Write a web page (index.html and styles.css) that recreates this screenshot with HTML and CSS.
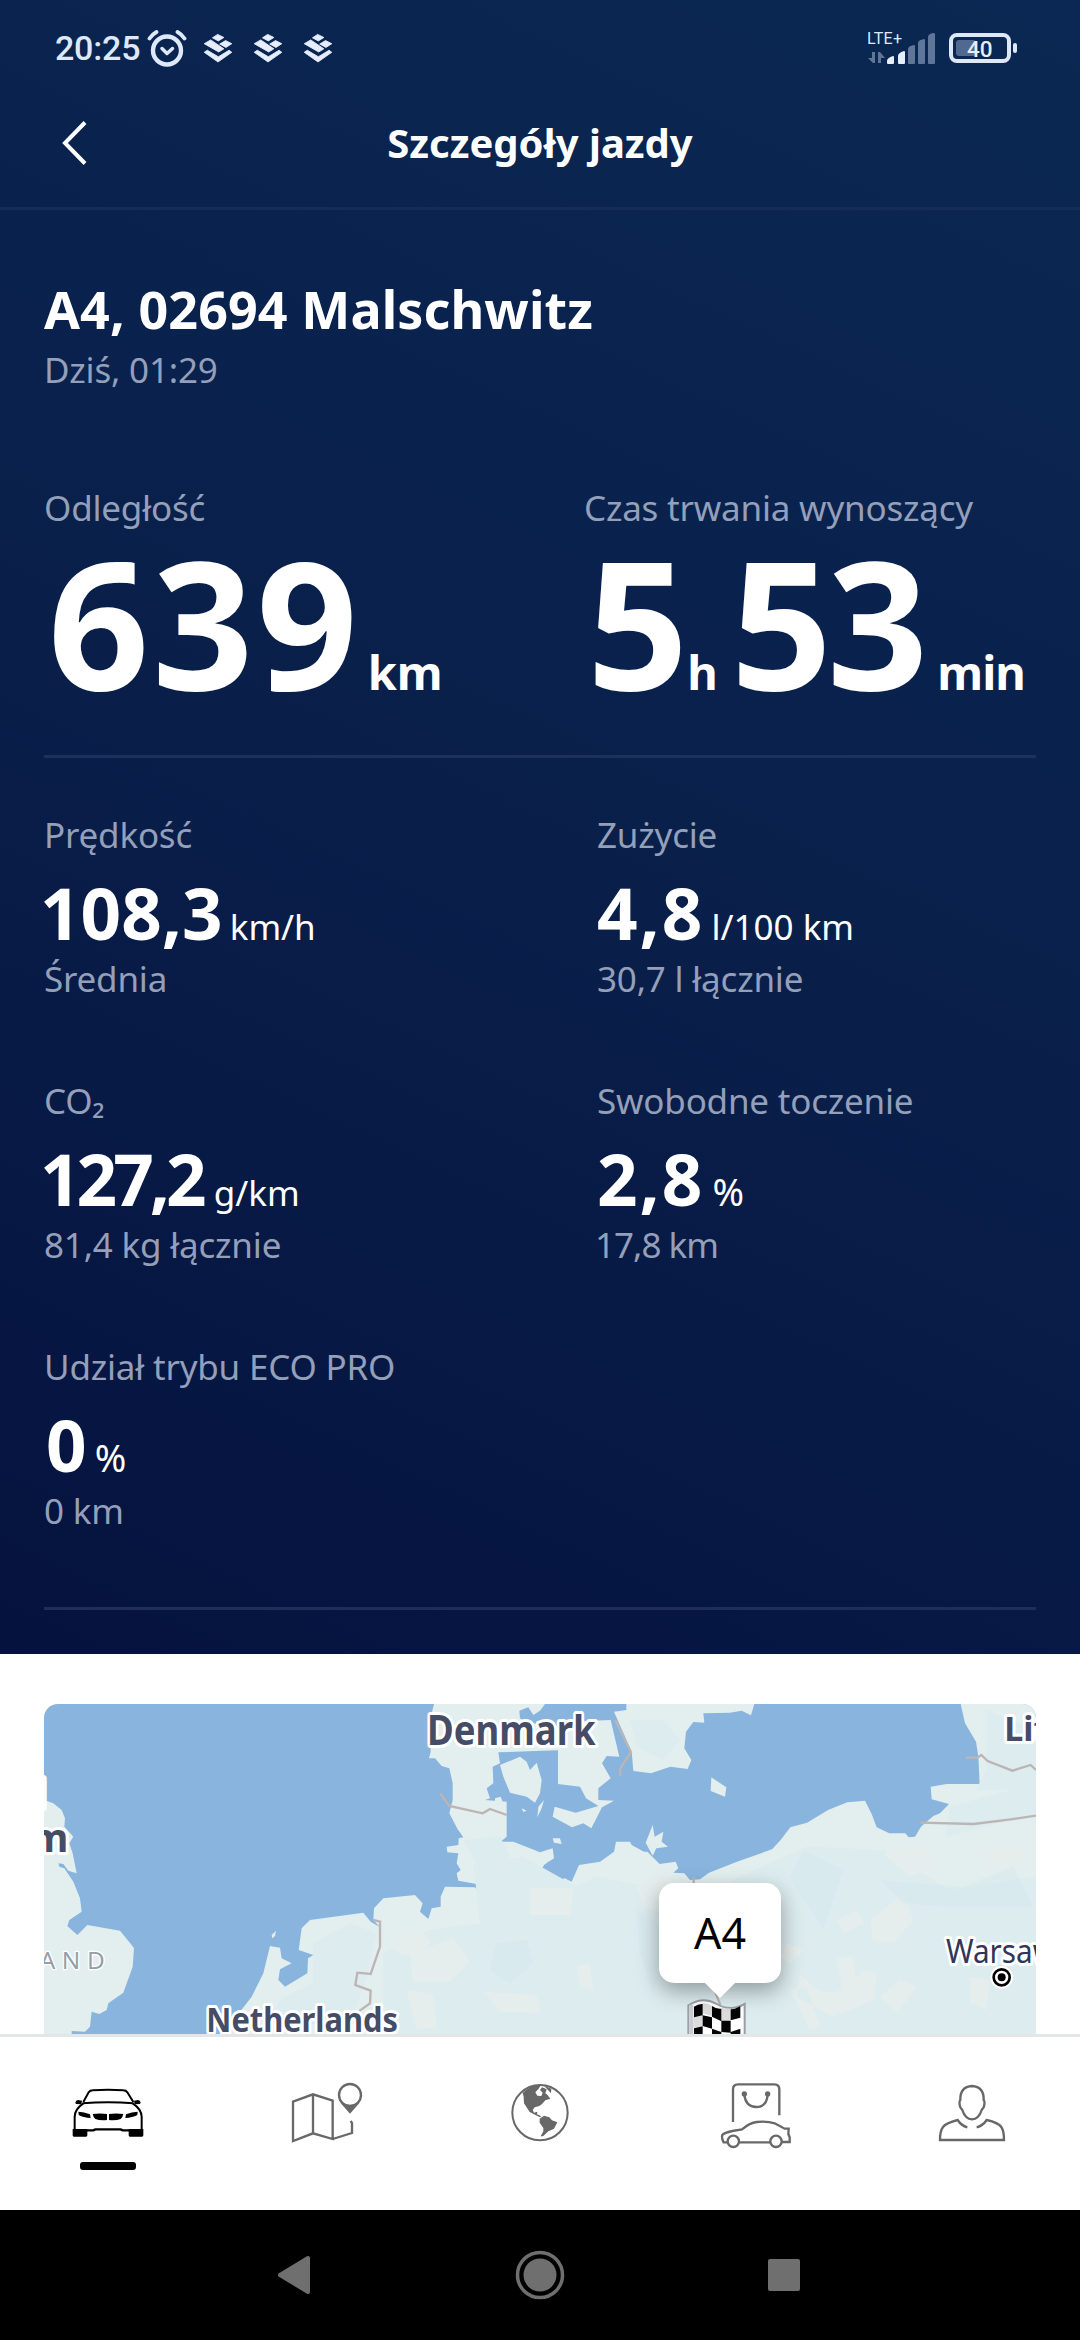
FILE: index.html
```html
<!DOCTYPE html>
<html lang="pl">
<head>
  <meta charset="UTF-8">
  <title>Szczegóły jazdy</title>
  <meta name="theme-color" content="#0a2650">
  <link rel="stylesheet" href="styles.css">
</head>
<body>
  <svg class="defs" width="0" height="0">
    <symbol id="layers" viewBox="590 99 86 87">
      <path stroke-width="2.500" stroke-linejoin="round" d="M632 103l18 9-16 10-17-9zM655 121l18 9-17 11-18-10zM612 119l38 26-15 9-42-24zM593 155l9-6 32 19 31-19 8 6-40 28z"/>
    </symbol>
  </svg>

  <div class="top">
    <div class="statusbar">
      <span class="time">20:25</span>
      <svg class="alarm" viewBox="0 0 40 38" fill="none">
        <circle cx="20" cy="21.5" r="14" stroke="#dfe8f9" stroke-width="4.4"/>
        <path d="M15 19.5l5 5 5.500-5" stroke="#dfe8f9" stroke-width="3.500" stroke-linecap="round" stroke-linejoin="round"/>
        <path d="M2.500 9.500Q5 5.500 9.500 3M30.500 3Q35 5.500 37.500 9.500" stroke="#dfe8f9" stroke-width="3.800" stroke-linecap="round"/>
      </svg>
      <svg class="layers"><use href="#layers"/></svg>
      <svg class="layers"><use href="#layers"/></svg>
      <svg class="layers"><use href="#layers"/></svg>
      <svg class="signal" viewBox="868 28 68 38">
        <text x="867" y="42.500" font-size="16" fill="#dfe8f9" textLength="35">LTE+</text>
        <path fill="#5f7699" d="M872 51h3v11h-2l-5-5h4zM878 62V51h2l5 6h-4v5z"/>
        <path fill="#e6edfb" d="M888 63q-1 0-1-1v-2q0-3 6-5 1 0 1 1v6q0 1-1 1zM899 63q-1 0-1-1v-7q0-3 6-5 1 0 1 1v11q0 1-1 1z"/>
        <path fill="#5f7699" d="M909 63q-1 0-1-1V48q0-3 6-4 1 0 1 1v17q0 1-1 1zM919 63q-1 0-1-1V42q0-3 6-4 1 0 1 1v23q0 1-1 1zM929 63q-1 0-1-1V36q0-3 5-4 2 0 2 1v29q0 1-1 1z"/>
      </svg>
      <svg class="battery" viewBox="949 31 69 32">
        <rect x="951" y="34" width="58" height="26" rx="6" fill="none" stroke="#dfe8f9" stroke-width="4"/>
        <rect x="956" y="39" width="20" height="16" rx="3" fill="#52698f"/>
        <rect x="1013" y="42" width="4" height="10" rx="2" fill="#dfe8f9"/>
        <text x="967" y="56" font-size="22.500" font-weight="500" fill="#e6edfb">40</text>
      </svg>
    </div>

    <div class="header">
      <svg class="back" viewBox="0 0 26 44" fill="none"><path d="M23 1.500L3 22l20 20.500" stroke="#fff" stroke-width="4"/></svg>
      <h1>Szczegóły jazdy</h1>
    </div>

    <div class="content">
      <h2>A4, 02694 Malschwitz</h2>
      <p class="muted date">Dziś, 01:29</p>

      <div class="main-stats">
        <div>
          <p class="muted">Odległość</p>
          <div class="big"><b class="km-value">639</b><span>km</span></div>
        </div>
        <div>
          <p class="muted">Czas trwania wynoszący</p>
          <div class="big"><b class="hours">5</b><span>h</span><b class="minutes">53</b><span class="min">min</span></div>
        </div>
      </div>

      <div class="stats">
        <div class="stat">
          <p class="muted">Prędkość</p>
          <div class="value one"><b>108,3</b><span>km/h</span></div>
          <p class="muted">Średnia</p>
        </div>
        <div class="stat">
          <p class="muted">Zużycie</p>
          <div class="value wide"><b>4,8</b><span>l/100 km</span></div>
          <p class="muted">30,7 l łącznie</p>
        </div>
        <div class="stat">
          <p class="muted">CO₂</p>
          <div class="value one tight"><b>127,2</b><span>g/km</span></div>
          <p class="muted">81,4 kg łącznie</p>
        </div>
        <div class="stat">
          <p class="muted">Swobodne toczenie</p>
          <div class="value wide"><b>2,8</b><span class="percent">%</span></div>
          <p class="muted seventeen">17,8 km</p>
        </div>
        <div class="stat">
          <p class="muted">Udział trybu ECO PRO</p>
          <div class="value zero"><b>0</b><span class="percent">%</span></div>
          <p class="muted">0 km</p>
        </div>
      </div>
    </div>
  </div>

  <div class="map-section">
    <div class="map">
      <svg viewBox="42 42 2976 990" width="992" height="330">
        <rect x="42" y="42" width="2976" height="990" fill="#88b4de"/>
        <!-- land -->
        <g fill="#e3eeee">
          <path d="M42 330L70 340 95 360 105 385 103 410 130 440 118 460 128 490 140 550 115 542 100 522 85 520 88 530 103 535 130 575 150 625 155 665 118 690 112 708 142 735 172 705 270 722 305 765 312 775 308 830 280 908 235 940 230 960 208 972 185 965 180 1010 165 1025 125 1023 125 1032 42 1032z"/>
          <path d="M570 1032L615 985 665 920 700 850 720 768 750 773 755 805 785 820 750 838 745 870 765 890 832 850 834 805 850 795 806 780 815 715 840 690 1000 668 1022 695 1050 712 1030 690 1032 655 1060 625 1155 615 1178 640 1170 665 1195 687 1205 655 1232 650 1232 620 1245 590 1335 592 1365 627 1340 582 1285 572 1280 550 1292 540 1280 520 1285 490 1252 487 1250 470 1285 465 1286 445 1300 442 1283 418 1258 370 1268 330 1268 280 1258 235 1235 228 1215 205 1197 205 1202 185 1200 90 1212 42 1545 42 1530 62 1510 75 1495 52 1468 62 1470 85 1490 98 1600 110 1600 180 1405 187 1410 220 1388 230 1390 280 1370 295 1380 325 1365 330 1430 335 1430 440 1412 455 1450 455 1475 465 1530 487 1568 475 1572 505 1542 525 1532 550 1595 560 1625 575 1647 525 1710 515 1752 485 1758 455 1800 455 1805 465 1842 485 1852 485 1889 522 1937 515 1945 535 1930 548 1963 550 1980 570 2010 568 2037 548 2121 515 2226 478 2252 450 2281 412 2331 398 2394 360 2452 337 2505 332 2525 372 2540 412 2578 430 2626 430 2636 442 2655 440 2673 410 2710 378 2730 370 2757 342 2705 328 2702 290 2750 282 2849 282 2845 200 2838 155 2805 100 2792 42 3018 42 3018 1032z"/>
          <path d="M1410 225L1470 200 1490 215 1500 240 1520 218 1535 270 1530 310 1515 338 1490 320 1440 308 1420 260z"/>
          <path d="M1584 180L1605 95 1742 90 1768 200 1730 198 1716 220 1742 265 1705 295 1705 330 1752 332 1716 352 1684 415 1660 400 1626 412 1568 380 1574 350 1637 368 1705 348 1668 325 1650 290 1584 282z"/>
          <path d="M1789 42L1789 60 1752 65 1805 185 1810 243 1863 250 1921 230 1973 237 1984 210 1963 175 1968 125 1990 96 2023 98 2020 70 2100 68 2135 62 2163 76 2173 42z"/>
          <path d="M2044 262L2089 292 2085 320 2042 303z"/>
          <path d="M1868 405L1874 440 1900 425 1895 455 1914 470 1879 475 1868 497 1847 458z"/>
          <path d="M1568 445L1590 445 1595 462 1572 458z"/>
          <path d="M1525 350L1542 330 1535 355 1522 382zM725 735L738 722 735 738 727 745zM1395 325L1412 320 1420 340 1395 345zM1475 355L1490 362 1480 366zM1500 42L1535 42 1515 60z"/>
        </g>
        <path fill="#88b4de" d="M1530 540l25-25 45-12 20 30-20 35-50-8z"/>
        <!-- lowlands and forests -->
        <g fill="#dcecef">
          <path d="M1330 520L1480 500 1640 590 1700 560 1900 600 1990 640 2130 560 2330 470 2560 480 2760 600 3018 560 3018 1032 1110 1032 1060 940 1060 790 1200 720 1350 700z"/>
          <path d="M850 760L960 700 1040 730 1010 860 960 1000 700 1010 760 920 850 880z"/>
          <path d="M1800 90l100 0 50 60-50 60-80-40zM2870 60l148 60v180l-180 0 30-60zM2760 350l258-70v90l-270 70z"/>
          <path d="M1300 450l110-10 30 60-90 40z"/>
        </g>
        <g fill="#e5eeec">
          <path d="M1100 740q90-40 100 20-60 60-110 15zM1140 790l130-45 50 70-60 60-110 0zM1360 905l160 10 10 55-120-5zM1130 900l80 10 10 100-60 10zM1500 595l130 0-10 80-120 0zM1820 590l90-50 40 60-30 80-80-30z"/>
          <path d="M2310 850q90 120 190-10l40 10-10 80-120 50-110-60zM2520 690l100-80 30 80-60 70-60-10zM2420 690l60-30 20 40-60 30zM2420 800l50 0 10 90-40 30zM2550 920l60-50 50 20-60 80zM2820 860l60 10-10 90-50-20zM2560 490l110-30 60 60-90 40zM2850 480l120-20 20 60-120 10zM2270 760l50 20-40 40-30-20zM2280 900l60 120 30-10-40-120zM1640 830l40-10 10 80-40-10z"/>
        </g>
        <path fill="#d7eaee" opacity=".7" d="M2550 570l250 20 150-60 60 120-250 0-140-10zM1400 760l90-10 20 70-70 60-60-40zM1820 660l110 70-60 180-40-120zM2280 560l40-80 120 60-60 180z"/>
        <!-- borders -->
        <g fill="none" stroke="#bdb5b5" stroke-width="7">
          <path d="M1030 690L1050 695 1050 770 1022 852 982 848 976 885 1022 902 1020 940 985 965M1230 310L1258 348 1358 370 1380 357 1430 375"/>
          <path d="M1756 90L1803 187 1771 235 1771 258M2808 203L2842 203 2854 195 2873 213 2947 242 3002 225 3018 240M2671 398L2831 402 2942 388 3018 377M1991 562v20M2055 905l16 40"/>
        </g>
        <!-- places -->
        <g class="places">
          <text x="1191" y="165" font-size="121" textLength="506" lengthAdjust="spacingAndGlyphs">Denmark</text>
          <text x="529" y="1027" font-size="102" textLength="575" lengthAdjust="spacingAndGlyphs">Netherlands</text>
          <text x="2923" y="152" font-size="102">Lit</text>
          <text x="0" y="486" font-size="118">m</text>
          <text x="14" y="354" font-size="118">l</text>
          <text x="2748" y="820" font-size="99" class="city" textLength="330" lengthAdjust="spacingAndGlyphs">Warsaw</text>
          <text x="29" y="837" font-size="73" class="region" textLength="195">AND</text>
        </g>
        <circle cx="2915" cy="862" r="34" fill="#fff"/>
        <circle cx="2915" cy="862" r="24" fill="#fff" stroke="#000" stroke-width="8"/>
        <circle cx="2915" cy="862" r="12" fill="#000"/>
        <!-- finish flag -->
        <g>
          <path d="M1975 946q45-28 85-4t84 0v130h-169z" fill="#fff" stroke="#9aa0a6" stroke-width="6"/>
          <path d="M1978 944h12v90h-12z" fill="#c9cdd1"/>
          <path fill="#dcdcdc" d="M2018 940q14-1 28 8v30l-28-8zM2074 953q13 4 28 2v36l-28 4zM1990 980l28-4v32l-28 6z"/>
          <path fill="#050505" d="M1992 950q13-9 26-8v34l-26 6zM2046 948q14 10 28 8v38l-28-14zM2102 958q14 0 29-9v34l-29 8zM2018 976l28 6v34l-28-8zM2074 992l28 0v36l-28-2zM1992 1015l26-6v30h-26zM2046 1016l28 10v14h-28zM2102 1026l29-10v24h-29z"/>
        </g>
      </svg>
      <div class="bubble">A4</div>
    </div>
  </div>

  <div class="tabbar">
    <div class="tab active">
      <svg viewBox="69 81 270 240" fill="none" stroke="#000" stroke-width="6">
        <path d="M130 156L146 127Q150 121 158 121Q204 118 250 121Q258 121 262 127L280 156"/>
        <path d="M128 160Q204 153 280 160"/>
        <path d="M130 160Q104 178 104 200V240M278 160Q305 178 305 200V240"/>
        <path d="M140 241H160L166 238H242L248 241H268" stroke-width="7"/>
        <path fill="#000" stroke="none" d="M98 237H142V256Q142 260 138 260H102Q98 260 98 256zM266 237H310V256Q310 260 306 260H270Q266 260 266 256zM106 158Q107 151 114 150L126 152 124 163 108 162zM302 158Q301 151 294 150L282 152 284 163 300 162zM115 185Q132 185 150 193L152 204Q130 203 116 195zM293 185Q276 185 258 193L256 204Q278 203 292 195zM158 192Q180 189 201 192V210Q180 212 166 207 160 202 158 192zM207 192Q228 189 250 192 248 202 242 207 228 212 207 210z"/>
      </svg>
      <i></i>
    </div>
    <div class="tab">
      <svg viewBox="717 81 270 240" fill="none" stroke="#686868" stroke-width="7">
        <path d="M759 155L819 133 878 152V267L819 250 759 273zM819 133V250M878 267L936 249V219L932 213"/>
        <circle cx="930" cy="135" r="33"/>
        <path fill="#686868" stroke="none" d="M901 158Q930 172 959 158L930 191z"/>
      </svg>
    </div>
    <div class="tab">
      <svg viewBox="45 81 270 240" fill="none" stroke="#686868" stroke-width="6">
        <circle cx="180" cy="188" r="83"/>
        <path fill="#686868" stroke="none" d="M128 129Q150 105 183 104L176 116 166 127 172 137 184 138 188 128 180 120 186 112 200 118 196 130 202 134 211 146 196 151 186 162 178 168 164 172 158 180 162 188 172 185 171 193 184 199 180 202 162 193 149 186 132 160 131 140zM192 107L214 116 213 130 204 120zM179 206L192 197 208 202 216 211 232 217 222 236 205 244 189 259 182 259 190 244 190 234 179 218z"/>
      </svg>
    </div>
    <div class="tab">
      <svg viewBox="693 81 270 240" fill="none" stroke="#686868" stroke-width="7">
        <path d="M759 216V118Q759 103 774 103H883Q898 103 898 118V196"/>
        <path d="M793 134Q797 171 829 171 860 171 863 134"/>
        <path d="M743 277H731Q724 264 727 255 731 249 757 243L786 238Q810 218 830 216 862 213 884 220L914 236H926L925 252 929 262V276H905M776 277H871"/>
        <circle cx="760" cy="274" r="17"/>
        <circle cx="888" cy="274" r="17"/>
        <circle cx="793" cy="132" r="8" fill="#686868" stroke="none"/>
        <circle cx="863" cy="132" r="8" fill="#686868" stroke="none"/>
      </svg>
    </div>
    <div class="tab">
      <svg viewBox="81 81 270 240" fill="none" stroke="#686868" stroke-width="7">
        <path d="M216 108Q180 110 181 150 176 155 181 172L187 180Q196 208 216 208 236 208 245 180L251 172Q256 155 251 150 252 110 216 108z"/>
        <path d="M202 232Q184 227 173 210 138 219 129 231 120 243 120 270H312Q312 243 304 231 295 218 260 210 249 227 230 232"/>
      </svg>
    </div>
  </div>

  <div class="sysnav">
    <svg viewBox="0 0 64 64"><path d="M16 32L44 15V49z" stroke="#6f6f6f" stroke-width="4" stroke-linejoin="round"/></svg>
    <svg viewBox="0 0 64 64"><circle cx="32" cy="32" r="22.500" fill="none" stroke="#6f6f6f" stroke-width="3.500"/><circle cx="32" cy="32" r="16.500"/></svg>
    <svg viewBox="0 0 64 64"><rect x="16" y="16" width="32" height="32" rx="2"/></svg>
  </div>
</body>
</html>
```
FILE: styles.css
```css
* {
  box-sizing: border-box;
}
body {
  margin: 0;
  width: 1080px;
  height: 2340px;
  overflow: hidden;
  background: #fff;
  font-family: "Noto Sans", "Open Sans", sans-serif;
  font-size: 35px;
}
h1, h2, p {
  margin: 0;
}
svg {
  display: block;
  flex: none;
}
.defs {
  position: absolute;
}
.top {
  height: 1654px;
  background: linear-gradient(205deg, #0a2853 0%, #091f4a 52%, #05123e 100%);
  color: #fff;
}

/* status bar */
.statusbar {
  display: flex;
  align-items: center;
  height: 96px;
  padding: 0 62px 0 55px;
  font-family: Roboto, sans-serif;
}
.time {
  width: 92px;
  font-size: 34px;
  font-weight: 500;
  letter-spacing: -0.2px;
  color: #dfe8f9;
}
.alarm {
  width: 40px;
  height: 38px;
  margin-right: 16px;
}
.layers {
  width: 30px;
  height: 30px;
  margin-right: 20px;
  fill: #e6edfb;
  stroke: #e6edfb;
}
.signal {
  width: 68px;
  height: 38px;
  margin-left: auto;
  margin-right: 13px;
}
.battery {
  width: 69px;
  height: 32px;
}

/* header */
.header {
  display: grid;
  grid-template-columns: 26px 1fr 26px;
  align-items: center;
  height: 114px;
  padding: 0 62px 18px;
  border-bottom: 3px solid #142d57;
}
.back {
  width: 26px;
  height: 44px;
}
.header h1 {
  font-size: 40px;
  line-height: 54px;
  text-align: center;
}

/* trip details */
.content {
  padding: 64px 44px 0;
}
.content h2 {
  font-size: 52px;
  line-height: 70px;
  letter-spacing: 0.1px;
}
.muted {
  line-height: 48px;
  letter-spacing: -0.2px;
  color: #949fb9;
}
.date {
  margin: 2px 0 90px;
}
.main-stats {
  display: grid;
  grid-template-columns: 540px 1fr;
  height: 274px;
  border-bottom: 3px solid #1c315b;
}
.big {
  display: flex;
  align-items: baseline;
  margin-top: 25px;
  padding-left: 4px;
  font-size: 47px;
  font-weight: 700;
  line-height: 50px;
}
.big b {
  font-size: 177px;
  font-weight: 700;
  line-height: 130px;
}
.km-value {
  margin-right: 7px;
  letter-spacing: 3px;
}
.big .hours {
  margin-left: -1px;
  letter-spacing: -1px;
}
.big .minutes {
  margin: 0 14px 0 13px;
  letter-spacing: -5px;
}
.min {
  letter-spacing: -1px;
}
.stats {
  display: grid;
  grid-template-columns: 553px 1fr;
  row-gap: 74px;
  padding: 53px 0 72px;
  border-bottom: 3px solid #1e2e59;
}
.value {
  display: flex;
  align-items: baseline;
  gap: 7px;
  height: 72px;
  margin: 18px 0 6px;
  line-height: 48px;
}
.value b {
  font-size: 71px;
  line-height: 72px;
}
.value.one {
  margin-left: -4px;
}
.value.wide b {
  letter-spacing: 2px;
}
.value.tight {
  gap: 11px;
}
.value.tight b {
  letter-spacing: -4px;
}
.value.zero {
  padding-left: 2px;
}
.percent {
  margin-left: 1px;
  font-size: 38px;
}
.seventeen {
  margin-left: -2px;
  letter-spacing: -1px;
}

/* map */
.map-section {
  height: 380px;
  padding: 50px 44px 0;
}
.map {
  position: relative;
  height: 330px;
  overflow: hidden;
  border-radius: 14px 14px 0 0;
}
.places text {
  font-weight: 700;
  fill: #454c66;
  stroke: #fff;
  stroke-width: 18px;
  stroke-linejoin: round;
  paint-order: stroke;
}
.places .city {
  font-weight: 400;
  fill: #2f3759;
}
.places .region {
  font-weight: 400;
  fill: #959fa8;
  stroke-width: 8px;
}
.bubble {
  position: absolute;
  left: 615px;
  top: 179px;
  width: 122px;
  height: 100px;
  border-radius: 15px;
  background: #fff;
  box-shadow: 0 8px 22px rgba(0, 0, 0, 0.35);
  color: #000;
  font-size: 43px;
  line-height: 100px;
  text-align: center;
}
.bubble::after {
  content: "";
  position: absolute;
  left: 45px;
  top: 99px;
  border: 16px solid transparent;
  border-top-color: #fff;
  border-bottom: 0;
}

/* bottom tabs */
.tabbar {
  display: flex;
  height: 176px;
  border-top: 3px solid #e4e5e8;
  background: #fff;
}
.tab {
  flex: 1;
  padding-top: 40px;
}
.tab svg {
  width: 90px;
  height: 80px;
  margin: 0 auto;
}
.tab i {
  display: block;
  width: 56px;
  height: 8px;
  margin: 5px auto 0;
  border-radius: 3px;
  background: #000;
}

/* system navigation */
.sysnav {
  display: flex;
  justify-content: center;
  gap: 180px;
  height: 130px;
  padding-top: 33px;
  background: #000;
}
.sysnav svg {
  width: 64px;
  height: 64px;
  fill: #6f6f6f;
}
```
